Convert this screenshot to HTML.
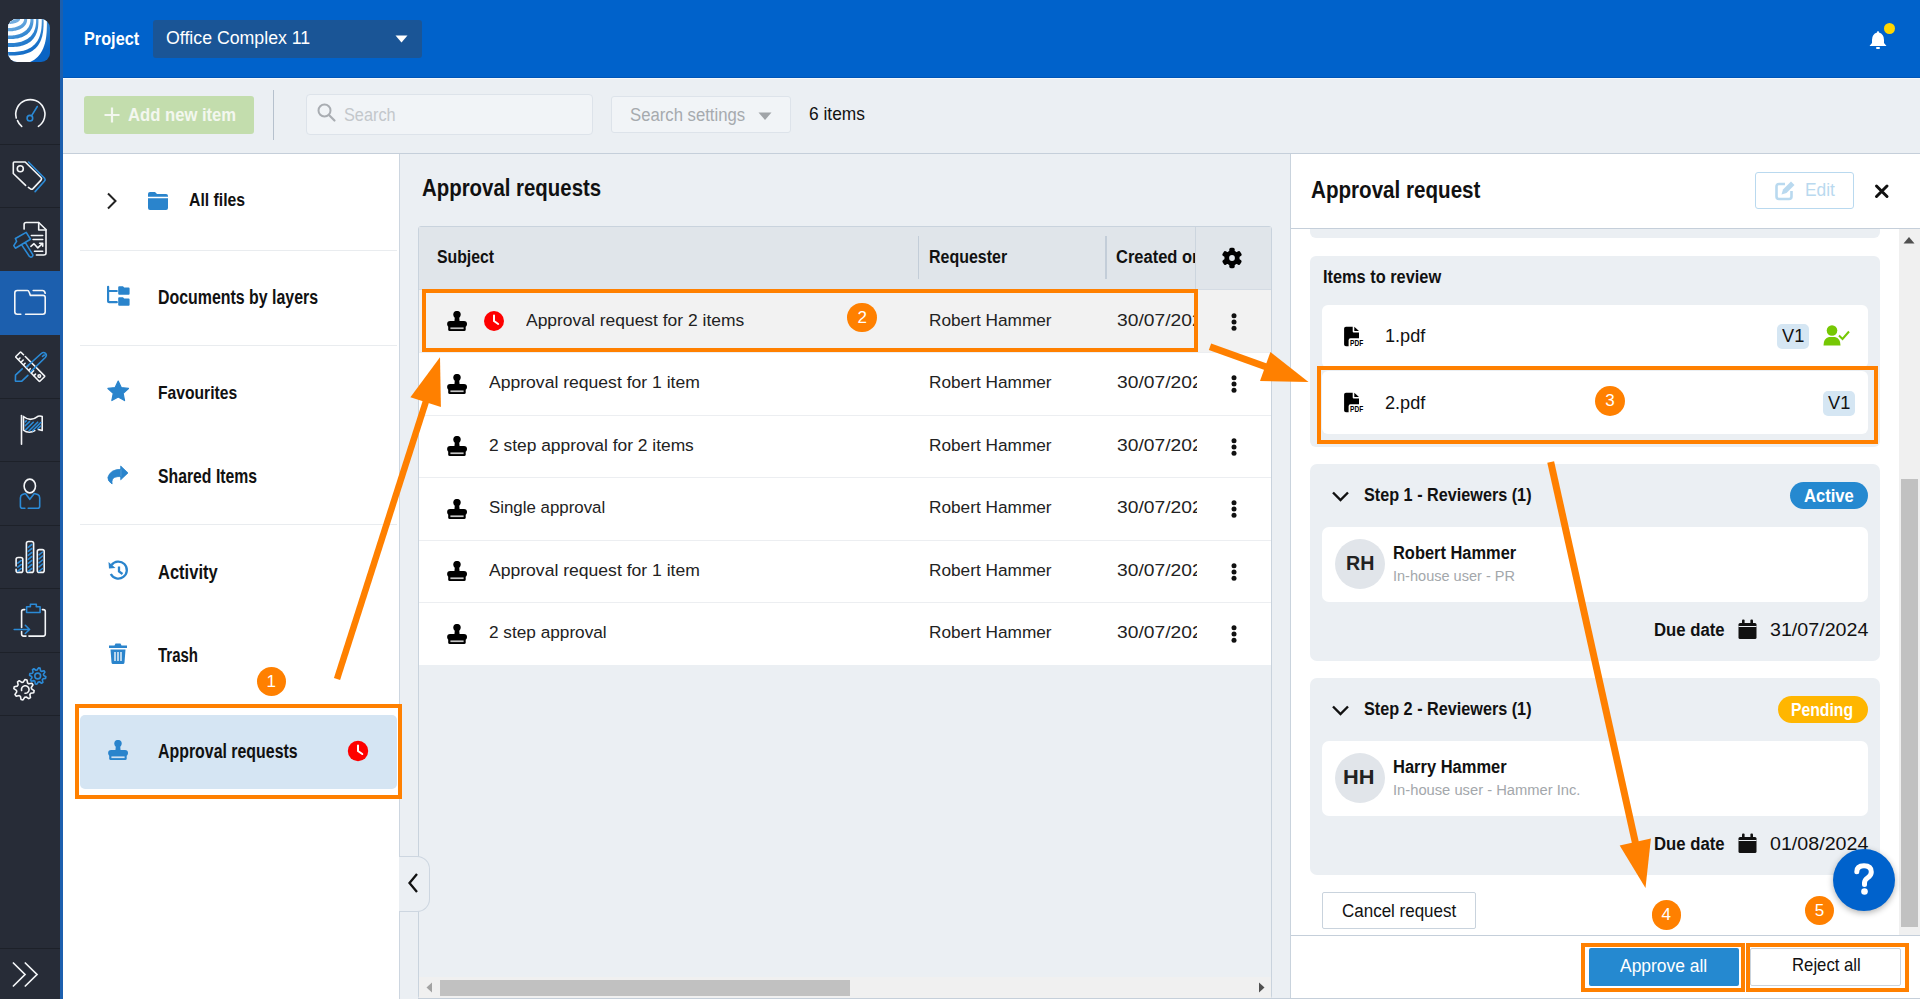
<!DOCTYPE html><html><head><meta charset="utf-8"><style>
html,body{margin:0;padding:0;width:1920px;height:999px;overflow:hidden;background:#fff;}
body{position:relative;font-family:"Liberation Sans",sans-serif;}
.r{position:absolute;}
.t{position:absolute;white-space:nowrap;transform-origin:0 0;}
</style></head><body>
<div class="r" style="left:0px;top:0px;width:60px;height:999px;background:#272c37;"></div>
<div class="r" style="left:60px;top:0px;width:3px;height:999px;background:#1c5fae;"></div>
<div class="r" style="left:0px;top:144px;width:60px;height:1px;background:#1d2129;"></div>
<div class="r" style="left:0px;top:207px;width:60px;height:1px;background:#1d2129;"></div>
<div class="r" style="left:0px;top:334px;width:60px;height:1px;background:#1d2129;"></div>
<div class="r" style="left:0px;top:398px;width:60px;height:1px;background:#1d2129;"></div>
<div class="r" style="left:0px;top:461px;width:60px;height:1px;background:#1d2129;"></div>
<div class="r" style="left:0px;top:525px;width:60px;height:1px;background:#1d2129;"></div>
<div class="r" style="left:0px;top:588px;width:60px;height:1px;background:#1d2129;"></div>
<div class="r" style="left:0px;top:652px;width:60px;height:1px;background:#1d2129;"></div>
<div class="r" style="left:0px;top:715px;width:60px;height:1px;background:#1d2129;"></div>
<div class="r" style="left:0px;top:948px;width:60px;height:1px;background:#1d2129;"></div>
<div class="r" style="left:0px;top:271px;width:60px;height:63.5px;background:#1c5fae;"></div>
<svg class="r" style="left:8px;top:19px;" width="42" height="43" viewBox="0 0 42 43"><defs><clipPath id="lc"><rect x="0" y="0" width="42" height="43" rx="9"/></clipPath>
<linearGradient id="lg" gradientUnits="userSpaceOnUse" x1="0" y1="0" x2="20" y2="40"><stop offset="0" stop-color="#8cc0e8"/><stop offset="0.5" stop-color="#2f84d0"/><stop offset="1" stop-color="#0a64c4"/></linearGradient></defs>
<g clip-path="url(#lc)"><rect x="0" y="0" width="42" height="43" fill="url(#lg)"/><path d="M0 0 L38.92 0.00 L38.89 6.17 L38.79 9.78 L38.64 12.80 L38.42 15.47 L38.14 17.91 L37.79 20.17 L37.39 22.27 L36.92 24.25 L36.39 26.11 L35.79 27.86 L35.13 29.52 L34.41 31.09 L33.63 32.57 L32.78 33.96 L31.87 35.28 L30.89 36.51 L29.85 37.67 L28.74 38.74 L27.55 39.75 L26.30 40.67 L24.98 41.53 L23.57 42.30 L22.09 43.01 L20.51 43.63 L18.84 44.19 L17.06 44.67 L15.15 45.08 L13.09 45.41 L10.83 45.67 L8.27 45.85 L5.22 45.96 L0.00 46.00 Z" fill="#fff"/><path d="M0 0 L35.63 0.00 L35.60 4.54 L35.51 7.32 L35.36 9.69 L35.15 11.80 L34.89 13.73 L34.56 15.53 L34.17 17.22 L33.73 18.81 L33.23 20.31 L32.66 21.73 L32.04 23.07 L31.36 24.34 L30.61 25.55 L29.81 26.69 L28.95 27.76 L28.03 28.77 L27.05 29.72 L26.00 30.60 L24.89 31.42 L23.72 32.18 L22.48 32.88 L21.17 33.52 L19.79 34.10 L18.32 34.62 L16.78 35.08 L15.13 35.47 L13.38 35.81 L11.49 36.08 L9.44 36.30 L7.14 36.45 L4.42 36.54 L0.00 36.57 Z" fill="url(#lg)"/><path d="M0 0 L33.75 0.00 L33.72 3.77 L33.63 6.21 L33.49 8.30 L33.28 10.19 L33.02 11.93 L32.70 13.56 L32.32 15.09 L31.88 16.55 L31.38 17.92 L30.83 19.23 L30.22 20.46 L29.55 21.64 L28.82 22.75 L28.04 23.81 L27.20 24.81 L26.30 25.74 L25.34 26.62 L24.32 27.45 L23.24 28.22 L22.10 28.93 L20.90 29.58 L19.64 30.18 L18.31 30.72 L16.90 31.21 L15.42 31.64 L13.85 32.01 L12.19 32.32 L10.41 32.58 L8.48 32.78 L6.34 32.93 L3.85 33.01 L0.00 33.04 Z" fill="#fff"/><path d="M0 0 L30.46 0.00 L30.43 2.93 L30.35 4.92 L30.21 6.66 L30.02 8.25 L29.77 9.72 L29.47 11.11 L29.11 12.43 L28.70 13.67 L28.24 14.86 L27.72 15.99 L27.15 17.06 L26.52 18.08 L25.84 19.05 L25.11 19.97 L24.33 20.85 L23.49 21.67 L22.60 22.44 L21.65 23.17 L20.65 23.84 L19.60 24.47 L18.49 25.04 L17.33 25.57 L16.11 26.05 L14.82 26.48 L13.47 26.86 L12.05 27.19 L10.54 27.47 L8.94 27.69 L7.22 27.87 L5.34 28.00 L3.18 28.07 L0.00 28.10 Z" fill="url(#lg)"/><path d="M0 0 L28.10 0.00 L28.07 2.28 L27.99 3.91 L27.86 5.37 L27.68 6.71 L27.44 7.96 L27.15 9.15 L26.81 10.29 L26.41 11.36 L25.97 12.39 L25.47 13.38 L24.92 14.32 L24.32 15.21 L23.67 16.07 L22.97 16.88 L22.22 17.65 L21.42 18.37 L20.58 19.06 L19.68 19.70 L18.73 20.30 L17.74 20.86 L16.69 21.37 L15.60 21.84 L14.45 22.27 L13.25 22.65 L11.99 22.99 L10.67 23.28 L9.29 23.53 L7.82 23.74 L6.26 23.90 L4.56 24.01 L2.66 24.08 L0.00 24.10 Z" fill="#fff"/><path d="M0 0 L25.52 0.00 L25.49 1.71 L25.42 3.01 L25.29 4.18 L25.12 5.28 L24.89 6.32 L24.62 7.31 L24.29 8.25 L23.92 9.16 L23.50 10.03 L23.03 10.86 L22.51 11.66 L21.94 12.43 L21.33 13.16 L20.67 13.85 L19.97 14.51 L19.22 15.14 L18.42 15.73 L17.59 16.28 L16.70 16.80 L15.78 17.28 L14.81 17.73 L13.79 18.14 L12.73 18.51 L11.63 18.84 L10.48 19.13 L9.28 19.39 L8.02 19.61 L6.70 19.78 L5.31 19.92 L3.82 20.02 L2.17 20.08 L0.00 20.10 Z" fill="url(#lg)"/><path d="M0 0 L22.46 0.00 L22.44 1.25 L22.37 2.26 L22.25 3.20 L22.09 4.09 L21.88 4.93 L21.63 5.74 L21.33 6.52 L20.99 7.28 L20.60 8.00 L20.17 8.70 L19.69 9.37 L19.17 10.02 L18.61 10.64 L18.01 11.22 L17.37 11.79 L16.69 12.32 L15.97 12.82 L15.21 13.30 L14.41 13.74 L13.57 14.15 L12.70 14.54 L11.79 14.89 L10.84 15.21 L9.86 15.49 L8.84 15.75 L7.78 15.97 L6.68 16.15 L5.53 16.31 L4.34 16.43 L3.07 16.51 L1.70 16.56 L0.00 16.58 Z" fill="#fff"/><path d="M0 0 L19.17 0.00 L19.15 0.82 L19.09 1.53 L18.98 2.20 L18.84 2.84 L18.65 3.46 L18.43 4.06 L18.16 4.64 L17.85 5.20 L17.51 5.75 L17.12 6.28 L16.70 6.79 L16.24 7.28 L15.74 7.75 L15.21 8.20 L14.64 8.63 L14.03 9.04 L13.40 9.43 L12.73 9.80 L12.03 10.14 L11.30 10.46 L10.53 10.76 L9.74 11.03 L8.92 11.28 L8.08 11.50 L7.20 11.70 L6.30 11.87 L5.37 12.02 L4.40 12.14 L3.41 12.23 L2.37 12.30 L1.27 12.34 L0.00 12.35 Z" fill="url(#lg)"/><path d="M0 0 L16.10 0.00 L16.08 0.52 L16.03 1.00 L15.93 1.47 L15.81 1.92 L15.64 2.37 L15.44 2.80 L15.21 3.23 L14.94 3.64 L14.63 4.05 L14.29 4.44 L13.92 4.82 L13.52 5.19 L13.08 5.54 L12.62 5.88 L12.12 6.21 L11.59 6.52 L11.04 6.81 L10.46 7.09 L9.86 7.35 L9.23 7.60 L8.57 7.83 L7.90 8.03 L7.20 8.22 L6.48 8.40 L5.74 8.55 L4.99 8.68 L4.21 8.79 L3.42 8.89 L2.61 8.96 L1.78 9.01 L0.93 9.04 L0.00 9.05 Z" fill="#fff"/><path d="M0 0 L12.10 0.00 L12.09 0.25 L12.04 0.50 L11.97 0.74 L11.87 0.99 L11.74 1.23 L11.58 1.47 L11.39 1.70 L11.18 1.94 L10.94 2.16 L10.67 2.39 L10.38 2.60 L10.06 2.81 L9.72 3.01 L9.35 3.21 L8.97 3.40 L8.56 3.58 L8.13 3.75 L7.68 3.91 L7.21 4.06 L6.72 4.21 L6.22 4.34 L5.70 4.46 L5.17 4.57 L4.63 4.67 L4.08 4.76 L3.51 4.84 L2.94 4.91 L2.36 4.96 L1.78 5.01 L1.19 5.04 L0.59 5.05 L0.00 5.06 Z" fill="#74aee0"/></g></svg>
<svg class="r" style="left:12px;top:95px;" width="36" height="36" viewBox="0 0 36 36"><path d="M9.7 31.4 A14.6 14.6 0 0 1 5.5 25.6 M4.25 23 A14.6 14.6 0 1 1 26.4 31.4" stroke="#f4f6f8" fill="none" stroke-width="1.6" stroke-linecap="round" stroke-linejoin="round"/><path d="M19.8 20.3 L25.3 11.5" stroke="#2b8ad6" fill="none" stroke-width="1.6" stroke-linecap="round" stroke-linejoin="round"/><circle cx="17.9" cy="23.2" r="2.8" stroke="#2b8ad6" fill="none" stroke-width="1.6" stroke-linecap="round" stroke-linejoin="round"/></svg>
<svg class="r" style="left:11px;top:159px;" width="38" height="36" viewBox="0 0 38 36"><path d="M14.6 26.4 L2.3 14.5 L2.3 4 Q2.3 3 3.3 3 L14.2 3 L30 18.5 Q31.2 19.8 30 21.1 L22 29.6 Q20.8 30.8 19.5 29.8 L17.4 28.4" stroke="#f4f6f8" fill="none" stroke-width="1.6" stroke-linecap="round" stroke-linejoin="round"/><circle cx="9.3" cy="9.7" r="3" stroke="#f4f6f8" fill="none" stroke-width="1.6" stroke-linecap="round" stroke-linejoin="round"/><path d="M17.5 3 L33.6 19.3 Q34.8 20.8 33.4 22.3 L24.1 32.6" stroke="#2b8ad6" fill="none" stroke-width="1.6" stroke-linecap="round" stroke-linejoin="round"/></svg>
<svg class="r" style="left:11px;top:219px;" width="38" height="40" viewBox="0 0 38 40"><path d="M13.1 10.1 L13.1 5.5 Q13.1 3.5 15.1 3.5 L27.7 3.5 L35 10.5 L35 34 Q35 36 33 36 L25.4 36" stroke="#f4f6f8" fill="none" stroke-width="1.6" stroke-linecap="round" stroke-linejoin="round"/><path d="M27.7 3.5 L27.7 11 L35 11" stroke="#f4f6f8" fill="none" stroke-width="1.6" stroke-linecap="round" stroke-linejoin="round"/><path d="M20.4 16.5 L31.7 16.5 M22.1 20.5 L31.7 20.5 M19.9 27.3 L23 24.7 L26.8 28.9 L31.5 24.4 M28.6 24.2 L31.7 24.2 L31.7 27.2 M23.5 32.2 L31.7 32.2" stroke="#f4f6f8" fill="none" stroke-width="1.6" stroke-linecap="round" stroke-linejoin="round"/><path d="M4.4 19.5 L15.2 13.4 L19.5 20.2 L4.4 29.2 L2.8 26.6 L5.6 22.3 Z M10.8 26.1 L18.3 37.2 Q19.6 38.6 21.1 37.7 Q22.4 36.7 21.6 35.3 L14.5 23.8" stroke="#2b8ad6" fill="none" stroke-width="1.6" stroke-linecap="round" stroke-linejoin="round"/></svg>
<svg class="r" style="left:12px;top:287px;" width="36" height="30" viewBox="0 0 36 30"><path d="M8.8 27.2 L5.3 27.2 Q2.8 27.2 2.8 24.7 L2.8 6 Q2.8 3.5 5.3 3.5 L15.5 3.5 Q16.6 3.5 17.1 5 L18.4 8.4 L31 8.4 Q33.2 8.4 33.2 10.6 L33.2 24.7 Q33.2 27.2 30.7 27.2 L13.6 27.2 M21.2 3.5 L30.5 3.5 Q32.5 3.5 33.2 6.2" stroke="#f4f6f8" fill="none" stroke-width="1.6" stroke-linecap="round" stroke-linejoin="round"/></svg>
<svg class="r" style="left:12px;top:348px;" width="38" height="36" viewBox="0 0 38 36"><path d="M11.5 6.7 L9 4.2 Q8.6 3.8 8.2 4.2 L3.9 8.5 Q3.5 8.9 3.9 9.3 L27.1 33.3 Q27.5 33.7 27.9 33.3 L32.5 28.7 Q32.9 28.3 32.5 27.9 L13.3 8.5" stroke="#f4f6f8" fill="none" stroke-width="1.6" stroke-linecap="round" stroke-linejoin="round"/><path d="M6.5 11.5 L8 10 M9 14.2 L11.2 12 M11.6 16.8 L13.1 15.3 M14.2 19.5 L16.4 17.3 M16.8 22.2 L18.3 20.7 M19.4 24.9 L21.6 22.7 M22 27.6 L23.5 26.1" stroke="#f4f6f8" fill="none" stroke-width="1.6" stroke-linecap="round" stroke-linejoin="round"/><circle cx="27.3" cy="28.1" r="1.3" stroke="#f4f6f8" fill="none" stroke-width="1.6" stroke-linecap="round" stroke-linejoin="round"/><path d="M14.5 18.8 L29.3 5.5 Q31.6 3.5 33.5 5.4 Q35.3 7.3 33.3 9.5 L18.5 23.8 M15.9 27.3 L9.8 33.2 L3.4 33.1 L3.5 27.2 L10.2 20.8 M30.5 8.3 L32.3 7" stroke="#2b8ad6" fill="none" stroke-width="1.6" stroke-linecap="round" stroke-linejoin="round"/></svg>
<svg class="r" style="left:14px;top:411px;" width="34" height="36" viewBox="0 0 34 36"><path d="M7.5 4.6 L7.5 33.2" stroke="#f4f6f8" fill="none" stroke-width="1.6" stroke-linecap="round" stroke-linejoin="round"/><path d="M9.5 5.5 Q13 8.4 16.3 8.4 Q20 8.4 23.9 5.3 Q26.5 4.7 28.2 5.5 L28.2 19.5 M24.4 18.5 L28.2 19.5 M20.8 19.7 Q18.5 21.3 15.4 21.3 Q12 21.3 9.5 19.2 L9.5 5.5" stroke="#f4f6f8" fill="none" stroke-width="1.6" stroke-linecap="round" stroke-linejoin="round"/><path d="M11.2 10.8 L12.3 9.8 M11.2 14.8 L15.5 10.6 M11.8 18.6 L19.2 11.2 M15.1 19.7 L23.7 11.2 M18.6 19.7 L26.8 11.5 M23.9 17.6 L26.6 15" stroke="#2b8ad6" fill="none" stroke-width="1.6" stroke-linecap="round" stroke-linejoin="round"/></svg>
<svg class="r" style="left:14px;top:476px;" width="34" height="36" viewBox="0 0 34 36"><ellipse cx="15.8" cy="10" rx="5.7" ry="6.9" stroke="#f4f6f8" fill="none" stroke-width="1.6" stroke-linecap="round" stroke-linejoin="round"/><path d="M11.5 17.6 L8.4 18.6 Q6.4 19.5 6.4 22 L6.4 30.3 Q6.4 32.3 8.4 32.3 L10.9 32.3 M14.2 32.3 L23.7 32.3 Q25.7 32.3 25.7 30.3 L25.7 22 Q25.7 19.5 23.7 18.6 L20.3 17.6 L15.8 23.3 L11.5 17.6" stroke="#2b8ad6" fill="none" stroke-width="1.6" stroke-linecap="round" stroke-linejoin="round"/></svg>
<svg class="r" style="left:12px;top:538px;" width="36" height="38" viewBox="0 0 36 38"><path d="M4.1 28 L4.1 21.5 Q4.1 19.5 6.1 19.5 L8.8 19.5 Q10.8 19.5 10.8 21.5 L10.8 32.4 Q10.8 34.4 8.8 34.4 L6.1 34.4 Q4.1 34.4 4.1 32.4 L4.1 31.2" stroke="#f4f6f8" fill="none" stroke-width="1.6" stroke-linecap="round" stroke-linejoin="round"/><rect x="14.4" y="3.5" width="7.2" height="30.9" rx="2" stroke="#f4f6f8" fill="none" stroke-width="1.6" stroke-linecap="round" stroke-linejoin="round"/><rect x="25.3" y="11.6" width="6.9" height="22.8" rx="2" stroke="#f4f6f8" fill="none" stroke-width="1.6" stroke-linecap="round" stroke-linejoin="round"/><path d="M16.2 9.3 L19.8 6.5 M16.2 13.3 L19.8 10.5 M16.2 17.3 L19.8 14.5 M16.2 21.3 L19.8 18.5 M16.2 25.3 L19.8 22.5 M16.2 29.3 L19.8 26.5 M16.2 33.3 L19.8 30.5 M27 16.8 L30.5 14 M27 20.8 L30.5 18 M27 24.8 L30.5 22 M27 28.8 L30.5 26 M27 33.3 L30.5 30.5 M5.8 25.1 L9.2 22.5 M5.8 29.1 L9.2 26.5 M5.8 33.1 L9.2 30.5 " stroke="#2b8ad6" fill="none" stroke-width="1.6" stroke-linecap="round" stroke-linejoin="round"/></svg>
<svg class="r" style="left:12px;top:601px;" width="36" height="38" viewBox="0 0 36 38"><path d="M12.7 8.6 L11.6 8.6 Q9.6 8.6 9.6 10.6 L9.6 26.4 M9.6 30.6 L9.6 33.1 Q9.6 35.1 11.6 35.1 L14 35.1 M16.9 35.1 L31.3 35.1 Q33.3 35.1 33.3 33.1 L33.3 10.6 Q33.3 8.6 31.3 8.6 L30.4 8.6" stroke="#f4f6f8" fill="none" stroke-width="1.6" stroke-linecap="round" stroke-linejoin="round"/><path d="M14.6 11.5 L14.6 5.8 L18.4 5.8 L18.4 3.3 L24.3 3.3 L24.3 5.8 L28.1 5.8 L28.1 11.5 Z" stroke="#2b8ad6" fill="none" stroke-width="1.6" stroke-linecap="round" stroke-linejoin="round"/><path d="M2.2 28.5 L17.6 28.5 M13.3 24.3 L17.6 28.5 L13.3 32.5" stroke="#2b8ad6" fill="none" stroke-width="1.6" stroke-linecap="round" stroke-linejoin="round"/></svg>
<svg class="r" style="left:11px;top:664px;" width="38" height="38" viewBox="0 0 38 38"><path d="M23.15 26.70 L22.76 28.66 L19.70 29.28 L18.87 30.52 L19.47 33.58 L17.81 34.70 L15.21 32.97 L13.74 33.26 L12.00 35.85 L10.04 35.46 L9.42 32.40 L8.18 31.57 L5.12 32.17 L4.00 30.51 L5.73 27.91 L5.44 26.44 L2.85 24.70 L3.24 22.74 L6.30 22.12 L7.13 20.88 L6.53 17.82 L8.19 16.70 L10.79 18.43 L12.26 18.14 L14.00 15.55 L15.96 15.94 L16.58 19.00 L17.82 19.83 L20.88 19.23 L22.00 20.89 L20.27 23.49 L20.56 24.96 Z" stroke="#f4f6f8" fill="none" stroke-width="1.6" stroke-linecap="round" stroke-linejoin="round"/><path d="M10.6 26.5 A3.8 3.8 0 1 1 14 29.3" stroke="#f4f6f8" fill="none" stroke-width="1.6" stroke-linecap="round" stroke-linejoin="round"/><path d="M34.86 12.80 L34.55 14.38 L31.99 14.83 L31.34 15.81 L31.90 18.34 L30.57 19.23 L28.44 17.74 L27.29 17.97 L25.90 20.16 L24.32 19.85 L23.87 17.29 L22.89 16.64 L20.36 17.20 L19.47 15.87 L20.96 13.74 L20.73 12.59 L18.54 11.20 L18.85 9.62 L21.41 9.17 L22.06 8.19 L21.50 5.66 L22.83 4.77 L24.96 6.26 L26.11 6.03 L27.50 3.84 L29.08 4.15 L29.53 6.71 L30.51 7.36 L33.04 6.80 L33.93 8.13 L32.44 10.26 L32.67 11.41 Z" stroke="#2b8ad6" fill="none" stroke-width="1.6" stroke-linecap="round" stroke-linejoin="round"/><circle cx="26.7" cy="12" r="2.9" stroke="#2b8ad6" fill="none" stroke-width="1.6" stroke-linecap="round" stroke-linejoin="round"/></svg>
<svg class="r" style="left:10px;top:958px;" width="40" height="32" viewBox="0 0 40 32"><path d="M3.4 5 L15 16.5 L3.4 28 M15.3 5 L27 16.5 L15.3 28" stroke="#f4f6f8" fill="none" stroke-width="1.7" stroke-linecap="round" stroke-linejoin="miter"/></svg>
<div class="r" style="left:63px;top:0px;width:1857px;height:77px;background:#0062cb;"></div>
<div class="r" style="left:63px;top:77px;width:1857px;height:1px;background:#0056b8;"></div>
<div class="r" style="left:63px;top:78px;width:1857px;height:1px;background:#f7f9fb;"></div>
<div id="t0" class="t" style="left:83.7px;top:28.90px;font-size:19.06px;line-height:19.06px;font-weight:700;color:#fff;transform:scaleX(0.8539);">Project</div>
<div class="r" style="left:153px;top:20px;width:269px;height:38px;background:#1a5596;border-radius:3px;"></div>
<div id="t1" class="t" style="left:165.6px;top:28.86px;font-size:18.41px;line-height:18.41px;font-weight:400;color:#fff;transform:scaleX(0.9634);">Office Complex 11</div>
<svg class="r" style="left:395px;top:35px;" width="13" height="8" viewBox="0 0 13 8"><path d="M0.5 0.5 L12.5 0.5 L6.5 7.5 Z" fill="#fff"/></svg>
<svg class="r" style="left:1868px;top:28px;" width="20" height="22" viewBox="0 0 20 22"><path d="M10 3 Q11 3 11 4.5 Q16 6 16 12 L16 15 L18.5 18 L1.5 18 L4 15 L4 12 Q4 6 9 4.5 Q9 3 10 3 Z" fill="#fff"/><rect x="8" y="19" width="4" height="2" rx="1" fill="#fff"/></svg>
<div class="r" style="left:1884px;top:23px;width:11px;height:11px;border-radius:50%;background:#ffd600"></div>
<div class="r" style="left:63px;top:79px;width:1857px;height:74px;background:#ebeff3;"></div>
<div class="r" style="left:63px;top:153px;width:1857px;height:1px;background:#c5cfda;"></div>
<div class="r" style="left:84px;top:96px;width:170px;height:38px;background:#c3ddad;border-radius:3px;"></div>
<svg class="r" style="left:104px;top:107px;" width="16" height="16" viewBox="0 0 16 16"><path d="M8 0.5 L8 15.5 M0.5 8 L15.5 8" stroke="#f3f7ef" stroke-width="2.2"/></svg>
<div id="t2" class="t" style="left:128.1px;top:104.75px;font-size:19.00px;line-height:19.00px;font-weight:700;color:#f3f7ef;transform:scaleX(0.8757);">Add new item</div>
<div class="r" style="left:273px;top:90px;width:1px;height:50px;background:#b6c1cd;"></div>
<div class="r" style="left:306px;top:94px;width:287px;height:41px;background:#f1f4f7;border:1px solid #dde3ea;box-sizing:border-box;border-radius:4px;"></div>
<svg class="r" style="left:317px;top:103px;" width="20" height="20" viewBox="0 0 20 20"><circle cx="7.5" cy="7.5" r="6" stroke="#a9adb2" stroke-width="2" fill="none"/><path d="M12 12 L17.5 17.5" stroke="#a9adb2" stroke-width="2.2" stroke-linecap="round"/></svg>
<div id="t3" class="t" style="left:343.8px;top:106.10px;font-size:18.12px;line-height:18.12px;font-weight:400;color:#c3c7cb;transform:scaleX(0.8998);">Search</div>
<div class="r" style="left:611px;top:96px;width:180px;height:37px;background:#f1f4f7;border:1px solid #dde3ea;box-sizing:border-box;border-radius:3px;"></div>
<div id="t4" class="t" style="left:630.3px;top:104.56px;font-size:18.99px;line-height:18.99px;font-weight:400;color:#a6aaae;transform:scaleX(0.8801);">Search settings</div>
<svg class="r" style="left:758px;top:112px;" width="14" height="9" viewBox="0 0 14 9"><path d="M0.5 0.5 L13.5 0.5 L7 8 Z" fill="#a0a4a8"/></svg>
<div id="t5" class="t" style="left:808.9px;top:106.12px;font-size:17.97px;line-height:17.97px;font-weight:400;color:#111;transform:scaleX(0.9661);">6 items</div>
<div class="r" style="left:63px;top:154px;width:336px;height:845px;background:#ffffff;"></div>
<div class="r" style="left:399px;top:154px;width:1px;height:845px;background:#cdd6e0;"></div>
<div class="r" style="left:80px;top:250px;width:317px;height:1px;background:#e9ecef;"></div>
<div class="r" style="left:80px;top:345px;width:317px;height:1px;background:#e9ecef;"></div>
<div class="r" style="left:80px;top:524px;width:317px;height:1px;background:#e9ecef;"></div>
<svg class="r" style="left:105px;top:191px;" width="14" height="20" viewBox="0 0 14 20"><path d="M3 2.5 L10.5 10 L3 17.5" stroke="#222" stroke-width="2" fill="none"/></svg>
<svg class="r" style="left:147px;top:191px;" width="22" height="20" viewBox="0 0 22 20"><path d="M1 3 Q1 1 3 1 L8 1 L10 3 L19 3 Q21 3 21 5 L21 5.8 L1 5.8 Z M1 7.2 L21 7.2 L21 17 Q21 19 19 19 L3 19 Q1 19 1 17 Z" fill="#2a84cc"/></svg>
<div id="t6" class="t" style="left:188.6px;top:190.32px;font-size:19.28px;line-height:19.28px;font-weight:700;color:#111;transform:scaleX(0.8187);">All files</div>
<svg class="r" style="left:106px;top:285px;" width="26" height="22" viewBox="0 0 26 22"><path d="M2.1 1.8 L2.1 16.2 Q2.1 17.2 3.1 17.2 L10.8 17.2 M2.1 6 L10.8 6" stroke="#2a84cc" stroke-width="2.2" stroke-linecap="round" fill="none"/><path d="M12.2 2.2 Q12.2 1.2 13.2 1.2 L17 1.2 L18.2 2.4 L22.6 2.4 Q23.6 2.4 23.6 3.4 L23.6 8.7 Q23.6 9.7 22.6 9.7 L13.2 9.7 Q12.2 9.7 12.2 8.7 Z M12.2 13.3 Q12.2 12.3 13.2 12.3 L17 12.3 L18.2 13.5 L22.6 13.5 Q23.6 13.5 23.6 14.5 L23.6 19.8 Q23.6 20.8 22.6 20.8 L13.2 20.8 Q12.2 20.8 12.2 19.8 Z" fill="#2a84cc"/></svg>
<div id="t7" class="t" style="left:158.1px;top:288.07px;font-size:19.57px;line-height:19.57px;font-weight:700;color:#111;transform:scaleX(0.8136);">Documents by layers</div>
<svg class="r" style="left:106px;top:380px;" width="24" height="24" viewBox="0 0 24 24"><path d="M12.20 1.00 L15.26 7.59 L22.47 8.46 L17.15 13.41 L18.55 20.54 L12.20 17.00 L5.85 20.54 L7.25 13.41 L1.93 8.46 L9.14 7.59 Z" fill="#2a84cc" stroke="#2a84cc" stroke-width="1.2" stroke-linejoin="round"/></svg>
<div id="t8" class="t" style="left:158.3px;top:383.32px;font-size:19.28px;line-height:19.28px;font-weight:700;color:#111;transform:scaleX(0.8118);">Favourites</div>
<svg class="r" style="left:106px;top:465px;" width="24" height="20" viewBox="0 0 24 20"><path d="M14.7 1 L22 7.9 L14.7 14.8 Z M15.5 4.3 Q4.5 4 1.9 12.3 Q1.4 16 6.1 19 Q5.2 14 8.8 12.3 Q11.8 11.2 15.5 11.6 Z" fill="#2a84cc" stroke="#2a84cc" stroke-width="0.8" stroke-linejoin="round"/></svg>
<div id="t9" class="t" style="left:158.3px;top:466.03px;font-size:20.43px;line-height:20.43px;font-weight:700;color:#111;transform:scaleX(0.7727);">Shared Items</div>
<svg class="r" style="left:107px;top:560px;" width="24" height="22" viewBox="0 0 24 22"><path d="M4.5 5 A8.5 8.5 0 1 1 3.8 14" stroke="#2a84cc" stroke-width="2.3" fill="none"/><path d="M1.5 2 L2 8.5 L8.5 8 Z" fill="#2a84cc"/><path d="M12 6.5 L12 11.5 L15.5 14" stroke="#2a84cc" stroke-width="2.3" fill="none"/></svg>
<div id="t10" class="t" style="left:158.3px;top:562.55px;font-size:19.71px;line-height:19.71px;font-weight:700;color:#111;transform:scaleX(0.8387);">Activity</div>
<svg class="r" style="left:108px;top:643px;" width="22" height="22" viewBox="0 0 22 22"><path d="M1 2.5 L6.5 2.5 L7.5 0.5 L12.5 0.5 L13.5 2.5 L19 2.5 L19 5 L1 5 Z M2.5 6.5 L17.5 6.5 L16.5 19.5 Q16.3 21 15 21 L5 21 Q3.7 21 3.5 19.5 Z" fill="#2a84cc"/><path d="M7 9 L7 18 M10 9 L10 18 M13 9 L13 18" stroke="#fff" stroke-width="1.3"/></svg>
<div id="t11" class="t" style="left:158.3px;top:645.57px;font-size:19.57px;line-height:19.57px;font-weight:700;color:#111;transform:scaleX(0.7672);">Trash</div>
<div class="r" style="left:80px;top:715px;width:316.5px;height:73.5px;background:#d5e5f3;border-radius:5px;"></div>
<svg class="r" style="left:108px;top:740px;" width="21" height="21" viewBox="0 0 21 21"><circle cx="10" cy="3.6" r="3.7" fill="#2a84cc"/><path d="M7.9 5.5 L12.1 5.5 L12.6 10.5 L7.4 10.5 Z" fill="#2a84cc"/><rect x="0.1" y="9.9" width="19.9" height="6.2" rx="3" fill="#2a84cc"/><path d="M1.2 15 L18.7 15 L18.7 18.4 Q18.7 19.9 17.2 19.9 L2.7 19.9 Q1.2 19.9 1.2 18.4 Z" fill="#2a84cc"/><rect x="3.4" y="16.4" width="13.2" height="1.7" fill="#cfe0f0"/></svg>
<div id="t12" class="t" style="left:157.8px;top:741.57px;font-size:19.57px;line-height:19.57px;font-weight:700;color:#111;transform:scaleX(0.8128);">Approval requests</div>
<svg class="r" style="left:347px;top:740px;" width="22" height="22" viewBox="0 0 22 22"><circle cx="11" cy="11" r="10.2" fill="#fe0000"/><path d="M11 5.39 L11 11 L15.284 14.06" stroke="#fff" stroke-width="2" fill="none" stroke-linecap="round"/></svg>
<div class="r" style="left:400px;top:154px;width:890px;height:845px;background:#ebeff3;"></div>
<div id="t13" class="t" style="left:421.6px;top:177.44px;font-size:23.48px;line-height:23.48px;font-weight:700;color:#111;transform:scaleX(0.8693);">Approval requests</div>
<div class="r" style="left:418px;top:226px;width:854px;height:773px;background:#ebeff3;border:1px solid #c9d3dd;border-radius:3px;box-sizing:border-box;"></div>
<div class="r" style="left:419px;top:227px;width:852px;height:62px;background:#e0e5ea;"></div>
<div class="r" style="left:419px;top:288.5px;width:852px;height:1px;background:#d4dbe3;"></div>
<div class="r" style="left:917.5px;top:236px;width:1.5px;height:43px;background:#c3cdd8;"></div>
<div class="r" style="left:1105px;top:236px;width:1.5px;height:43px;background:#c3cdd8;"></div>
<div class="r" style="left:1195px;top:227px;width:1px;height:62px;background:#ccd5de;"></div>
<div id="t14" class="t" style="left:437.0px;top:248.19px;font-size:18.84px;line-height:18.84px;font-weight:700;color:#111;transform:scaleX(0.8396);">Subject</div>
<div id="t15" class="t" style="left:928.5px;top:248.36px;font-size:18.41px;line-height:18.41px;font-weight:700;color:#111;transform:scaleX(0.8677);">Requester</div>
<div class="r" style="left:1105px;top:227px;width:90px;height:62px;overflow:hidden"><div id="t16" class="t" style="left:10.6px;top:21.36px;font-size:18.41px;line-height:18.41px;font-weight:700;color:#111;transform:scaleX(0.8961);">Created on</div></div>
<svg class="r" style="left:1221px;top:247px;" width="22" height="22" viewBox="0 0 22 22"><g fill="#000"><circle cx="11" cy="11" r="7.6"/><rect x="8.3" y="0.8" width="5.4" height="6" rx="1.6" transform="rotate(0 11 11)"/><rect x="8.3" y="0.8" width="5.4" height="6" rx="1.6" transform="rotate(60 11 11)"/><rect x="8.3" y="0.8" width="5.4" height="6" rx="1.6" transform="rotate(120 11 11)"/><rect x="8.3" y="0.8" width="5.4" height="6" rx="1.6" transform="rotate(180 11 11)"/><rect x="8.3" y="0.8" width="5.4" height="6" rx="1.6" transform="rotate(240 11 11)"/><rect x="8.3" y="0.8" width="5.4" height="6" rx="1.6" transform="rotate(300 11 11)"/></g><circle cx="11" cy="11" r="2.9" fill="#e0e5ea"/></svg>
<div class="r" style="left:419px;top:289.5px;width:852px;height:62.5px;background:#f2f2f2;"></div>
<svg class="r" style="left:447px;top:311px;" width="21" height="21" viewBox="0 0 21 21"><circle cx="10" cy="3.6" r="3.7" fill="#000"/><path d="M7.9 5.5 L12.1 5.5 L12.6 10.5 L7.4 10.5 Z" fill="#000"/><rect x="0.1" y="9.9" width="19.9" height="6.2" rx="3" fill="#000"/><path d="M1.2 15 L18.7 15 L18.7 18.4 Q18.7 19.9 17.2 19.9 L2.7 19.9 Q1.2 19.9 1.2 18.4 Z" fill="#000"/><rect x="3.4" y="16.4" width="13.2" height="1.7" fill="#c0c0c0"/></svg>
<svg class="r" style="left:483px;top:310px;" width="22" height="22" viewBox="0 0 22 22"><circle cx="11" cy="11" r="10" fill="#fe0000"/><path d="M11 5.5 L11 11 L15.2 14" stroke="#fff" stroke-width="2" fill="none" stroke-linecap="round"/></svg>
<div id="t17" class="t" style="left:525.7px;top:312.53px;font-size:16.67px;line-height:16.67px;font-weight:400;color:#222;transform:scaleX(1.0476);">Approval request for 2 items</div>
<div id="t18" class="t" style="left:929.2px;top:312.53px;font-size:16.67px;line-height:16.67px;font-weight:400;color:#222;transform:scaleX(1.0348);">Robert Hammer</div>
<div class="r" style="left:1105px;top:289.5px;width:92px;height:62px;overflow:hidden"><div id="t19" class="t" style="left:11.7px;top:23.03px;font-size:16.67px;line-height:16.67px;font-weight:400;color:#222;transform:scaleX(1.1556);">30/07/2024</div></div>
<svg class="r" style="left:1230px;top:312.5px;" width="8" height="18" viewBox="0 0 8 18"><circle cx="4" cy="2.7" r="2.5" fill="#111"/><circle cx="4" cy="9" r="2.5" fill="#111"/><circle cx="4" cy="15.3" r="2.5" fill="#111"/></svg>
<div class="r" style="left:419px;top:352px;width:852px;height:62.5px;background:#ffffff;"></div>
<div class="r" style="left:419px;top:352px;width:852px;height:1px;background:#eceef1;"></div>
<svg class="r" style="left:447px;top:373.5px;" width="21" height="21" viewBox="0 0 21 21"><circle cx="10" cy="3.6" r="3.7" fill="#000"/><path d="M7.9 5.5 L12.1 5.5 L12.6 10.5 L7.4 10.5 Z" fill="#000"/><rect x="0.1" y="9.9" width="19.9" height="6.2" rx="3" fill="#000"/><path d="M1.2 15 L18.7 15 L18.7 18.4 Q18.7 19.9 17.2 19.9 L2.7 19.9 Q1.2 19.9 1.2 18.4 Z" fill="#000"/><rect x="3.4" y="16.4" width="13.2" height="1.7" fill="#c8c8c8"/></svg>
<div id="t20" class="t" style="left:488.5px;top:375.03px;font-size:16.67px;line-height:16.67px;font-weight:400;color:#222;transform:scaleX(1.0543);">Approval request for 1 item</div>
<div id="t21" class="t" style="left:929.2px;top:375.03px;font-size:16.67px;line-height:16.67px;font-weight:400;color:#222;transform:scaleX(1.0348);">Robert Hammer</div>
<div class="r" style="left:1105px;top:352px;width:92px;height:62px;overflow:hidden"><div id="t22" class="t" style="left:11.7px;top:23.03px;font-size:16.67px;line-height:16.67px;font-weight:400;color:#222;transform:scaleX(1.1556);">30/07/2024</div></div>
<svg class="r" style="left:1230px;top:375px;" width="8" height="18" viewBox="0 0 8 18"><circle cx="4" cy="2.7" r="2.5" fill="#111"/><circle cx="4" cy="9" r="2.5" fill="#111"/><circle cx="4" cy="15.3" r="2.5" fill="#111"/></svg>
<div class="r" style="left:419px;top:414.5px;width:852px;height:62.5px;background:#ffffff;"></div>
<div class="r" style="left:419px;top:414.5px;width:852px;height:1px;background:#eceef1;"></div>
<svg class="r" style="left:447px;top:436px;" width="21" height="21" viewBox="0 0 21 21"><circle cx="10" cy="3.6" r="3.7" fill="#000"/><path d="M7.9 5.5 L12.1 5.5 L12.6 10.5 L7.4 10.5 Z" fill="#000"/><rect x="0.1" y="9.9" width="19.9" height="6.2" rx="3" fill="#000"/><path d="M1.2 15 L18.7 15 L18.7 18.4 Q18.7 19.9 17.2 19.9 L2.7 19.9 Q1.2 19.9 1.2 18.4 Z" fill="#000"/><rect x="3.4" y="16.4" width="13.2" height="1.7" fill="#c8c8c8"/></svg>
<div id="t23" class="t" style="left:488.5px;top:437.53px;font-size:16.67px;line-height:16.67px;font-weight:400;color:#222;transform:scaleX(1.0435);">2 step approval for 2 items</div>
<div id="t24" class="t" style="left:929.2px;top:437.53px;font-size:16.67px;line-height:16.67px;font-weight:400;color:#222;transform:scaleX(1.0348);">Robert Hammer</div>
<div class="r" style="left:1105px;top:414.5px;width:92px;height:62px;overflow:hidden"><div id="t25" class="t" style="left:11.7px;top:23.03px;font-size:16.67px;line-height:16.67px;font-weight:400;color:#222;transform:scaleX(1.1556);">30/07/2024</div></div>
<svg class="r" style="left:1230px;top:437.5px;" width="8" height="18" viewBox="0 0 8 18"><circle cx="4" cy="2.7" r="2.5" fill="#111"/><circle cx="4" cy="9" r="2.5" fill="#111"/><circle cx="4" cy="15.3" r="2.5" fill="#111"/></svg>
<div class="r" style="left:419px;top:477px;width:852px;height:62.5px;background:#ffffff;"></div>
<div class="r" style="left:419px;top:477px;width:852px;height:1px;background:#eceef1;"></div>
<svg class="r" style="left:447px;top:498.5px;" width="21" height="21" viewBox="0 0 21 21"><circle cx="10" cy="3.6" r="3.7" fill="#000"/><path d="M7.9 5.5 L12.1 5.5 L12.6 10.5 L7.4 10.5 Z" fill="#000"/><rect x="0.1" y="9.9" width="19.9" height="6.2" rx="3" fill="#000"/><path d="M1.2 15 L18.7 15 L18.7 18.4 Q18.7 19.9 17.2 19.9 L2.7 19.9 Q1.2 19.9 1.2 18.4 Z" fill="#000"/><rect x="3.4" y="16.4" width="13.2" height="1.7" fill="#c8c8c8"/></svg>
<div id="t26" class="t" style="left:488.5px;top:500.03px;font-size:16.67px;line-height:16.67px;font-weight:400;color:#222;transform:scaleX(1.0118);">Single approval</div>
<div id="t27" class="t" style="left:929.2px;top:500.03px;font-size:16.67px;line-height:16.67px;font-weight:400;color:#222;transform:scaleX(1.0348);">Robert Hammer</div>
<div class="r" style="left:1105px;top:477px;width:92px;height:62px;overflow:hidden"><div id="t28" class="t" style="left:11.7px;top:23.03px;font-size:16.67px;line-height:16.67px;font-weight:400;color:#222;transform:scaleX(1.1556);">30/07/2024</div></div>
<svg class="r" style="left:1230px;top:500px;" width="8" height="18" viewBox="0 0 8 18"><circle cx="4" cy="2.7" r="2.5" fill="#111"/><circle cx="4" cy="9" r="2.5" fill="#111"/><circle cx="4" cy="15.3" r="2.5" fill="#111"/></svg>
<div class="r" style="left:419px;top:539.5px;width:852px;height:62.5px;background:#ffffff;"></div>
<div class="r" style="left:419px;top:539.5px;width:852px;height:1px;background:#eceef1;"></div>
<svg class="r" style="left:447px;top:561px;" width="21" height="21" viewBox="0 0 21 21"><circle cx="10" cy="3.6" r="3.7" fill="#000"/><path d="M7.9 5.5 L12.1 5.5 L12.6 10.5 L7.4 10.5 Z" fill="#000"/><rect x="0.1" y="9.9" width="19.9" height="6.2" rx="3" fill="#000"/><path d="M1.2 15 L18.7 15 L18.7 18.4 Q18.7 19.9 17.2 19.9 L2.7 19.9 Q1.2 19.9 1.2 18.4 Z" fill="#000"/><rect x="3.4" y="16.4" width="13.2" height="1.7" fill="#c8c8c8"/></svg>
<div id="t29" class="t" style="left:488.5px;top:562.53px;font-size:16.67px;line-height:16.67px;font-weight:400;color:#222;transform:scaleX(1.0543);">Approval request for 1 item</div>
<div id="t30" class="t" style="left:929.2px;top:562.53px;font-size:16.67px;line-height:16.67px;font-weight:400;color:#222;transform:scaleX(1.0348);">Robert Hammer</div>
<div class="r" style="left:1105px;top:539.5px;width:92px;height:62px;overflow:hidden"><div id="t31" class="t" style="left:11.7px;top:23.03px;font-size:16.67px;line-height:16.67px;font-weight:400;color:#222;transform:scaleX(1.1556);">30/07/2024</div></div>
<svg class="r" style="left:1230px;top:562.5px;" width="8" height="18" viewBox="0 0 8 18"><circle cx="4" cy="2.7" r="2.5" fill="#111"/><circle cx="4" cy="9" r="2.5" fill="#111"/><circle cx="4" cy="15.3" r="2.5" fill="#111"/></svg>
<div class="r" style="left:419px;top:602px;width:852px;height:62.5px;background:#ffffff;"></div>
<div class="r" style="left:419px;top:602px;width:852px;height:1px;background:#eceef1;"></div>
<svg class="r" style="left:447px;top:623.5px;" width="21" height="21" viewBox="0 0 21 21"><circle cx="10" cy="3.6" r="3.7" fill="#000"/><path d="M7.9 5.5 L12.1 5.5 L12.6 10.5 L7.4 10.5 Z" fill="#000"/><rect x="0.1" y="9.9" width="19.9" height="6.2" rx="3" fill="#000"/><path d="M1.2 15 L18.7 15 L18.7 18.4 Q18.7 19.9 17.2 19.9 L2.7 19.9 Q1.2 19.9 1.2 18.4 Z" fill="#000"/><rect x="3.4" y="16.4" width="13.2" height="1.7" fill="#c8c8c8"/></svg>
<div id="t32" class="t" style="left:488.5px;top:625.03px;font-size:16.67px;line-height:16.67px;font-weight:400;color:#222;transform:scaleX(1.0334);">2 step approval</div>
<div id="t33" class="t" style="left:929.2px;top:625.03px;font-size:16.67px;line-height:16.67px;font-weight:400;color:#222;transform:scaleX(1.0348);">Robert Hammer</div>
<div class="r" style="left:1105px;top:602px;width:92px;height:62px;overflow:hidden"><div id="t34" class="t" style="left:11.7px;top:23.03px;font-size:16.67px;line-height:16.67px;font-weight:400;color:#222;transform:scaleX(1.1556);">30/07/2024</div></div>
<svg class="r" style="left:1230px;top:625px;" width="8" height="18" viewBox="0 0 8 18"><circle cx="4" cy="2.7" r="2.5" fill="#111"/><circle cx="4" cy="9" r="2.5" fill="#111"/><circle cx="4" cy="15.3" r="2.5" fill="#111"/></svg>
<div class="r" style="left:419px;top:977px;width:852px;height:21px;background:#f0f0f0;"></div>
<div class="r" style="left:440px;top:979.5px;width:410px;height:16.5px;background:#c1c1c1;"></div>
<svg class="r" style="left:426px;top:982px;" width="7" height="11" viewBox="0 0 7 11"><path d="M6 0.5 L6 10.5 L0.5 5.5 Z" fill="#a3a3a3"/></svg>
<svg class="r" style="left:1258px;top:982px;" width="7" height="11" viewBox="0 0 7 11"><path d="M1 0.5 L1 10.5 L6.5 5.5 Z" fill="#505050"/></svg>
<div class="r" style="left:399px;top:855.5px;width:31px;height:56px;background:#ebeff3;border:1px solid #cdd6e0;border-left:none;border-radius:0 13px 13px 0;box-sizing:border-box;"></div>
<svg class="r" style="left:406px;top:872px;" width="14" height="22" viewBox="0 0 14 22"><path d="M11 2 L3.5 11 L11 20" stroke="#111" stroke-width="2.3" fill="none"/></svg>
<div class="r" style="left:1290px;top:154px;width:1px;height:845px;background:#c9d3dd;"></div>
<div class="r" style="left:1291px;top:154px;width:629px;height:845px;background:#ffffff;"></div>
<div id="t35" class="t" style="left:1310.8px;top:177.67px;font-size:23.91px;line-height:23.91px;font-weight:700;color:#111;transform:scaleX(0.8618);">Approval request</div>
<div class="r" style="left:1755px;top:172px;width:99px;height:37px;background:#fff;border:1.5px solid #b9d9ef;box-sizing:border-box;border-radius:3px;"></div>
<svg class="r" style="left:1774px;top:180px;" width="22" height="22" viewBox="0 0 22 22"><path d="M11 4 L5 4 Q2.5 4 2.5 6.5 L2.5 16.5 Q2.5 19 5 19 L15 19 Q17.5 19 17.5 16.5 L17.5 11" stroke="#b9d9ef" stroke-width="2.6" fill="none"/><path d="M7.5 14.5 L9 9.5 L17 1.5 L20.5 5 L12.5 13 Z" fill="#b9d9ef"/></svg>
<div id="t36" class="t" style="left:1804.6px;top:180.98px;font-size:18.26px;line-height:18.26px;font-weight:400;color:#b9d9ef;transform:scaleX(0.9511);">Edit</div>
<svg class="r" style="left:1873px;top:183px;" width="17" height="16" viewBox="0 0 17 16"><path d="M3.5 3 L14 13.5 M14 3 L3.5 13.5" stroke="#111" stroke-width="3" stroke-linecap="round"/></svg>
<div class="r" style="left:1291px;top:228px;width:629px;height:1px;background:#c5cfda;"></div>
<div class="r" style="left:1291px;top:229px;width:608px;height:706px;overflow:hidden">
<div class="r" style="left:19px;top:-49px;width:570px;height:57.5px;background:#ebeff3;border-radius:6px;"></div>
<div class="r" style="left:19px;top:27.3px;width:570px;height:190.3px;background:#ebeff3;border-radius:6px;"></div>
<div id="t37" class="t" style="left:31.5px;top:38.83px;font-size:18.55px;line-height:18.55px;font-weight:700;color:#111;transform:scaleX(0.8824);">Items to review</div>
<div class="r" style="left:31px;top:76px;width:546px;height:63px;background:#ffffff;border-radius:6px;"></div>
<div class="r" style="left:31px;top:142px;width:546px;height:63px;background:#ffffff;border-radius:6px;"></div>
<svg class="r" style="left:53px;top:96.5px;" width="21" height="21" viewBox="0 0 21 21"><path d="M0.1 2.5 Q0.1 0.7 2 0.7 L8.7 0.7 L8.7 5.5 Q8.7 6.6 9.8 6.6 L15 6.6 L15 12.2 L6.5 12.2 Q4.6 12.2 4.6 14.3 L4.6 20.3 L2 20.3 Q0.1 20.3 0.1 18.5 Z M10.3 0.7 L15 5 L10.3 5 Z" fill="#000"/><text x="6.1" y="20.3" font-family="Liberation Sans" font-weight="700" font-size="8.6" fill="#000" textLength="13.2" lengthAdjust="spacingAndGlyphs">PDF</text></svg>
<div id="t38" class="t" style="left:94.3px;top:97.46px;font-size:18.99px;line-height:18.99px;font-weight:400;color:#111;transform:scaleX(0.9534);">1.pdf</div>
<div class="r" style="left:486px;top:95px;width:32px;height:25px;background:#d5e6f3;border-radius:5px;"></div>
<div id="t39" class="t" style="left:490.6px;top:98.06px;font-size:18.41px;line-height:18.41px;font-weight:400;color:#111;transform:scaleX(0.9894);">V1</div>
<svg class="r" style="left:532px;top:96px;" width="27" height="22" viewBox="0 0 27 22"><circle cx="9" cy="5.5" r="5.3" fill="#76c804"/><path d="M0.5 20.5 Q0.5 13 6 12 L12 12 Q17.5 13 17.5 20.5 Z" fill="#76c804"/><path d="M16 10.5 L19.5 14 L26 6.5" stroke="#76c804" stroke-width="2" fill="none"/></svg>
<svg class="r" style="left:53px;top:163.3px;" width="21" height="21" viewBox="0 0 21 21"><path d="M0.1 2.5 Q0.1 0.7 2 0.7 L8.7 0.7 L8.7 5.5 Q8.7 6.6 9.8 6.6 L15 6.6 L15 12.2 L6.5 12.2 Q4.6 12.2 4.6 14.3 L4.6 20.3 L2 20.3 Q0.1 20.3 0.1 18.5 Z M10.3 0.7 L15 5 L10.3 5 Z" fill="#000"/><text x="6.1" y="20.3" font-family="Liberation Sans" font-weight="700" font-size="8.6" fill="#000" textLength="13.2" lengthAdjust="spacingAndGlyphs">PDF</text></svg>
<div id="t40" class="t" style="left:94.3px;top:164.16px;font-size:18.99px;line-height:18.99px;font-weight:400;color:#111;transform:scaleX(0.9534);">2.pdf</div>
<div class="r" style="left:532px;top:162px;width:32px;height:25px;background:#d5e6f3;border-radius:5px;"></div>
<div id="t41" class="t" style="left:536.8px;top:165.06px;font-size:18.41px;line-height:18.41px;font-weight:400;color:#111;transform:scaleX(0.9894);">V1</div>
<div class="r" style="left:19px;top:235px;width:570px;height:196.5px;background:#ebeff3;border-radius:7px;"></div><svg class="r" style="left:40px;top:261px;" width="20" height="13" viewBox="0 0 20 13"><path d="M2 2.5 L9.5 10 L17 2.5" stroke="#111" stroke-width="2.4" fill="none"/></svg><div id="t42" class="t" style="left:72.9px;top:257.92px;font-size:17.97px;line-height:17.97px;font-weight:700;color:#111;transform:scaleX(0.9027);">Step 1 - Reviewers (1)</div><div class="r" style="left:498.7px;top:253.2px;width:78.5px;height:27px;background:#2589d0;border-radius:14px;"></div><div id="t43" class="t" style="left:513.3px;top:257.80px;font-size:18.12px;line-height:18.12px;font-weight:700;color:#fff;transform:scaleX(0.9155);">Active</div><div class="r" style="left:31px;top:298px;width:546px;height:75px;background:#ffffff;border-radius:7px;"></div><div class="r" style="left:44px;top:309.5px;width:50px;height:50px;border-radius:50%;background:#e1e5ea"></div><div id="t44" class="t" style="left:54.6px;top:324.77px;font-size:19.57px;line-height:19.57px;font-weight:700;color:#222;transform:scaleX(1.0039);">RH</div><div id="t45" class="t" style="left:102.3px;top:315.10px;font-size:18.12px;line-height:18.12px;font-weight:700;color:#111;transform:scaleX(0.9065);">Robert Hammer</div><div id="t46" class="t" style="left:102.3px;top:340.16px;font-size:14.64px;line-height:14.64px;font-weight:400;color:#a3a7ab;transform:scaleX(0.9940);">In-house user - PR</div><div id="t47" class="t" style="left:362.5px;top:390.56px;font-size:18.99px;line-height:18.99px;font-weight:700;color:#111;transform:scaleX(0.8813);">Due date</div><svg class="r" style="left:447px;top:390px;" width="20" height="21" viewBox="0 0 20 21"><rect x="0.5" y="4" width="18" height="16" rx="1.5" fill="#111"/><rect x="4" y="0.5" width="2.6" height="5" rx="1" fill="#111"/><rect x="12.4" y="0.5" width="2.6" height="5" rx="1" fill="#111"/><rect x="0.5" y="7" width="18" height="1" fill="#ebeff3"/></svg><div id="t48" class="t" style="left:478.9px;top:390.56px;font-size:18.99px;line-height:18.99px;font-weight:400;color:#111;transform:scaleX(1.0354);">31/07/2024</div>
<div class="r" style="left:19px;top:449px;width:570px;height:196.5px;background:#ebeff3;border-radius:7px;"></div><svg class="r" style="left:40px;top:475px;" width="20" height="13" viewBox="0 0 20 13"><path d="M2 2.5 L9.5 10 L17 2.5" stroke="#111" stroke-width="2.4" fill="none"/></svg><div id="t49" class="t" style="left:72.9px;top:471.92px;font-size:17.97px;line-height:17.97px;font-weight:700;color:#111;transform:scaleX(0.9027);">Step 2 - Reviewers (1)</div><div class="r" style="left:487px;top:467.2px;width:90px;height:27px;background:#ffb600;border-radius:14px;"></div><div id="t50" class="t" style="left:500.3px;top:471.80px;font-size:18.12px;line-height:18.12px;font-weight:700;color:#fff;transform:scaleX(0.8693);">Pending</div><div class="r" style="left:31px;top:512px;width:546px;height:75px;background:#ffffff;border-radius:7px;"></div><div class="r" style="left:44px;top:523.5px;width:50px;height:50px;border-radius:50%;background:#e1e5ea"></div><div id="t51" class="t" style="left:52.3px;top:538.77px;font-size:19.57px;line-height:19.57px;font-weight:700;color:#222;transform:scaleX(1.1154);">HH</div><div id="t52" class="t" style="left:102.3px;top:529.10px;font-size:18.12px;line-height:18.12px;font-weight:700;color:#111;transform:scaleX(0.9105);">Harry Hammer</div><div id="t53" class="t" style="left:102.3px;top:554.16px;font-size:14.64px;line-height:14.64px;font-weight:400;color:#a3a7ab;transform:scaleX(1.0070);">In-house user - Hammer Inc.</div><div id="t54" class="t" style="left:362.5px;top:604.56px;font-size:18.99px;line-height:18.99px;font-weight:700;color:#111;transform:scaleX(0.8813);">Due date</div><svg class="r" style="left:447px;top:604px;" width="20" height="21" viewBox="0 0 20 21"><rect x="0.5" y="4" width="18" height="16" rx="1.5" fill="#111"/><rect x="4" y="0.5" width="2.6" height="5" rx="1" fill="#111"/><rect x="12.4" y="0.5" width="2.6" height="5" rx="1" fill="#111"/><rect x="0.5" y="7" width="18" height="1" fill="#ebeff3"/></svg><div id="t55" class="t" style="left:478.9px;top:604.56px;font-size:18.99px;line-height:18.99px;font-weight:400;color:#111;transform:scaleX(1.0354);">01/08/2024</div>
<div class="r" style="left:31px;top:663.3px;width:153.5px;height:36.5px;background:#fff;border:1px solid #c9d3dd;box-sizing:border-box;border-radius:2px;"></div>
<div id="t56" class="t" style="left:50.8px;top:671.64px;font-size:19.13px;line-height:19.13px;font-weight:400;color:#111;transform:scaleX(0.8884);">Cancel request</div>
</div>
<div class="r" style="left:1899px;top:229px;width:21px;height:706px;background:#f0f0f0;"></div>
<div class="r" style="left:1901px;top:479px;width:17px;height:448px;background:#c1c1c1;"></div>
<svg class="r" style="left:1903px;top:236px;" width="12" height="8" viewBox="0 0 12 8"><path d="M0.5 7.5 L11.5 7.5 L6 1 Z" fill="#505050"/></svg>
<div class="r" style="left:1291px;top:935px;width:629px;height:1px;background:#c5cfda;"></div>
<div class="r" style="left:1291px;top:936px;width:629px;height:62px;background:#ffffff;"></div>
<div class="r" style="left:1588.5px;top:948px;width:150.5px;height:38px;background:#2589d0;border-radius:2px;"></div>
<div id="t57" class="t" style="left:1620.0px;top:957.30px;font-size:18.12px;line-height:18.12px;font-weight:400;color:#fff;transform:scaleX(0.9626);">Approve all</div>
<div class="r" style="left:1750px;top:948px;width:151px;height:38px;background:#fff;border:1px solid #c9d3dd;box-sizing:border-box;border-radius:2px;"></div>
<div id="t58" class="t" style="left:1792.0px;top:957.12px;font-size:17.97px;line-height:17.97px;font-weight:400;color:#111;transform:scaleX(0.9314);">Reject all</div>
<div class="r" style="left:418px;top:998px;width:1502px;height:1px;background:#c5cfda;"></div>
<div class="r" style="left:1833px;top:848.5px;width:62px;height:62px;border-radius:50%;background:#0062cc;box-shadow:0 2px 6px rgba(0,0,0,0.3)"></div>
<svg class="r" style="left:1849px;top:861px;" width="30" height="40" viewBox="0 0 30 40"><path d="M7.8 10.8 Q7.8 4.8 15 4.8 Q22.3 4.8 22.3 11 Q22.3 14.6 18.6 16.8 Q15.5 18.7 15.5 22 L15.5 23.5" stroke="#fff" stroke-width="5" fill="none" stroke-linecap="round"/><circle cx="15.5" cy="30.5" r="3.3" fill="#fff"/></svg>
<div class="r" style="left:75px;top:704px;width:326.5px;height:95px;border:4px solid #ff8000;box-sizing:border-box"></div>
<div class="r" style="left:422px;top:289px;width:775.5px;height:63px;border:4px solid #ff8000;box-sizing:border-box"></div>
<div class="r" style="left:1317px;top:366px;width:561px;height:78px;border:4px solid #ff8000;box-sizing:border-box"></div>
<div class="r" style="left:1580.5px;top:942.5px;width:164.5px;height:49.5px;border:4px solid #ff8000;box-sizing:border-box"></div>
<div class="r" style="left:1746px;top:942.5px;width:163px;height:49.5px;border:4px solid #ff8000;box-sizing:border-box"></div>
<svg class="r" style="left:0;top:0" width="1920" height="999"><path d="M337.0 679.0 L426.3 400.2" stroke="#ff8000" stroke-width="6.5"/><path d="M440.0 357.3 L440.9 406.9 L410.4 397.2 Z" fill="#ff8000"/><path d="M1210.0 346.8 L1267.1 367.2" stroke="#ff8000" stroke-width="7"/><path d="M1308.5 382.0 L1260.0 381.1 L1270.4 351.9 Z" fill="#ff8000"/><path d="M1550.7 462.0 L1635.7 844.1" stroke="#ff8000" stroke-width="7"/><path d="M1645.5 888.0 L1619.7 845.6 L1650.9 838.6 Z" fill="#ff8000"/></svg>
<div class="r" style="left:256.7px;top:666.8px;width:29px;height:29px;border-radius:50%;background:#ff8000;color:#fff;font-size:17px;line-height:29px;text-align:center">1</div>
<div class="r" style="left:847.4px;top:302.8px;width:29.6px;height:29.6px;border-radius:50%;background:#ff8000;color:#fff;font-size:17px;line-height:29.6px;text-align:center">2</div>
<div class="r" style="left:1595px;top:385.7px;width:30px;height:30px;border-radius:50%;background:#ff8000;color:#fff;font-size:17px;line-height:30px;text-align:center">3</div>
<div class="r" style="left:1651.5px;top:900.4px;width:29.6px;height:29.6px;border-radius:50%;background:#ff8000;color:#fff;font-size:17px;line-height:29.6px;text-align:center">4</div>
<div class="r" style="left:1804.7px;top:895.7px;width:29.6px;height:29.6px;border-radius:50%;background:#ff8000;color:#fff;font-size:17px;line-height:29.6px;text-align:center">5</div>
</body></html>
